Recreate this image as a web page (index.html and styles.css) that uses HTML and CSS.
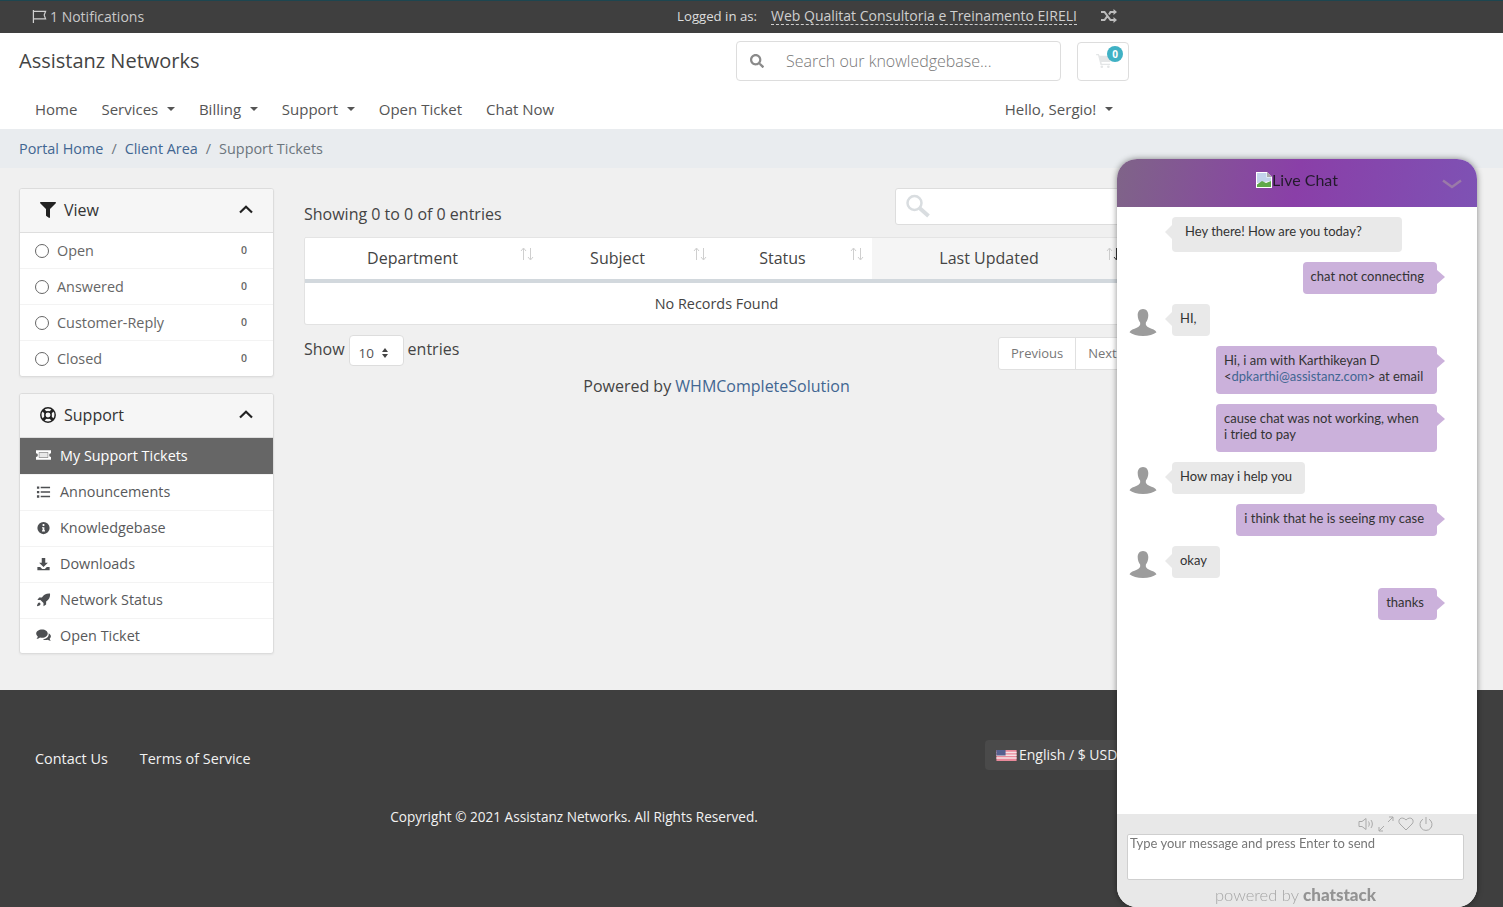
FILE: index.html
```html
<!DOCTYPE html>
<html lang="en">
<head>
<meta charset="utf-8">
<title>Support Tickets - Assistanz Networks</title>
<link rel="stylesheet" href="styles.css">
</head>
<body>
<div class="topbar">
  <a class="notif"><svg class="i-flag" viewBox="0 0 16 16"><path d="M1.500 1v14M1.500 2.500h13l-1.500 4 1.500 4h-13" fill="none" stroke="currentColor" stroke-width="1.300"/></svg>1 Notifications</a>
  <div class="login">
    <span class="login-label">Logged in as:</span>
    <a class="login-name">Web Qualitat Consultoria e Treinamento EIRELI</a>
    <svg class="i-shuffle" viewBox="0 0 16 14"><path d="M0 3h3.500l6 8H13M0 11h3.500L6 7.700M8 5.500 9.500 3H13" fill="none" stroke="currentColor" stroke-width="2"/><path d="M12.500 0 16 3l-3.500 3zM12.500 8 16 11l-3.500 3z" fill="currentColor"/></svg>
  </div>
</div>

<header class="header">
  <div class="header-row">
    <a class="brand">Assistanz Networks</a>
    <div class="search">
      <svg class="i-search" viewBox="0 0 512 512"><path d="M505 442.700L405.300 343c-4.500-4.500-10.600-7-17-7H372c27.600-35.300 44-79.700 44-128C416 93.100 322.900 0 208 0S0 93.100 0 208s93.100 208 208 208c48.300 0 92.700-16.400 128-44v16.300c0 6.400 2.500 12.500 7 17l99.700 99.700c9.400 9.400 24.600 9.400 33.900 0l28.300-28.300c9.400-9.400 9.400-24.600.1-34zM208 336c-70.700 0-128-57.200-128-128 0-70.700 57.200-128 128-128 70.700 0 128 57.200 128 128 0 70.700-57.200 128-128 128z"/></svg>
      <span>Search our knowledgebase...</span>
    </div>
    <a class="cart">
      <svg class="i-cart" viewBox="0 0 18 16"><path d="M0 0h3l1 2h14l-2 7H6l.5 2H16v1.500H5L2.200 1.500H0z"/><circle cx="6.500" cy="14.500" r="1.500"/><circle cx="14" cy="14.500" r="1.500"/></svg>
      <span class="badge">0</span>
    </a>
  </div>
  <nav class="nav">
    <a class="nav-link">Home</a>
    <a class="nav-link caret">Services</a>
    <a class="nav-link caret">Billing</a>
    <a class="nav-link caret">Support</a>
    <a class="nav-link">Open Ticket</a>
    <a class="nav-link">Chat Now</a>
    <a class="nav-link caret nav-user">Hello, Sergio!</a>
  </nav>
</header>

<div class="crumbs">
  <a>Portal Home</a><span class="sep">/</span><a>Client Area</a><span class="sep">/</span><span class="crumb-now">Support Tickets</span>
</div>

<main class="main">
  <aside class="sidebar">
    <section class="card">
      <div class="card-head">
        <svg class="head-icon" viewBox="0 0 512 512"><path d="M487.976 0H24.028C2.710 0-8.047 25.866 7.058 40.971L192 225.941V432c0 7.831 3.821 15.170 10.237 19.662l80 55.980C298.020 518.690 320 507.493 320 487.980V225.941l184.947-184.970C520.021 25.896 509.338 0 487.976 0z"/></svg>
        <span class="head-title">View</span>
        <svg class="chev" viewBox="0 0 14 9"><path d="M1 7.500 7 1.800l6 5.700" fill="none" stroke="currentColor" stroke-width="2.200"/></svg>
      </div>
      <a class="row"><i class="radio"></i><span class="row-text">Open</span><span class="count">0</span></a>
      <a class="row"><i class="radio"></i><span class="row-text">Answered</span><span class="count">0</span></a>
      <a class="row"><i class="radio"></i><span class="row-text">Customer-Reply</span><span class="count">0</span></a>
      <a class="row"><i class="radio"></i><span class="row-text">Closed</span><span class="count">0</span></a>
    </section>
    <section class="card">
      <div class="card-head">
        <svg class="head-icon" viewBox="0 0 16 16"><circle cx="8" cy="8" r="7.200" fill="none" stroke="currentColor" stroke-width="1.500"/><circle cx="8" cy="8" r="3.200" fill="none" stroke="currentColor" stroke-width="1.500"/><path d="m2.800 2.800 3 3m7.400-3-3 3m-7.400 7.400 3-3m7.400 3-3-3" stroke="currentColor" stroke-width="3"/></svg>
        <span class="head-title">Support</span>
        <svg class="chev" viewBox="0 0 14 9"><path d="M1 7.500 7 1.800l6 5.700" fill="none" stroke="currentColor" stroke-width="2.200"/></svg>
      </div>
      <a class="row row-link active"><svg class="row-icon" viewBox="0 0 16 12"><path fill-rule="evenodd" d="M0 1h16v3a2 2 0 0 0 0 4v3H0V8a2 2 0 0 0 0-4zm3 2v6h10V3z"/><path d="M3.500 3.500h9v5h-9z" opacity=".85"/></svg><span>My Support Tickets</span></a>
      <a class="row row-link"><svg class="row-icon" viewBox="0 0 16 14"><path d="M1 1h2.500v2.500H1zM1 5.800h2.500v2.500H1zM1 10.500h2.500V13H1zM5 1.500h10V3H5zM5 6.300h10v1.500H5zM5 11h10v1.500H5z"/></svg><span>Announcements</span></a>
      <a class="row row-link"><svg class="row-icon" viewBox="0 0 16 16"><path fill-rule="evenodd" d="M8 1a7 7 0 1 1 0 14A7 7 0 0 1 8 1zM7 3.500v2.200h2V3.500zM6.300 7v1.400H7v2.300h-.7V12h3.400v-1.300H9V7z"/></svg><span>Knowledgebase</span></a>
      <a class="row row-link"><svg class="row-icon" viewBox="0 0 16 16"><path d="M6 1h4v5.500h3l-5 5-5-5h3zM1 11.500h3.200L6.500 13.700h3l2.300-2.200H15V15H1z"/></svg><span>Downloads</span></a>
      <a class="row row-link"><svg class="row-icon" viewBox="0 0 16 16"><path d="M15.500.5c.4 4-1.200 7.300-4.500 9.300V13l-3 2v-3.500L4.500 8H1l2-3h3.200C8.200 1.700 11.500.100 15.500.5zM2.500 11c1.200-.6 2.500.9 2 2-.6 1.200-2.500 1.700-4 2 .2-1.500.8-3.400 2-4z"/></svg><span>Network Status</span></a>
      <a class="row row-link"><svg class="row-icon" viewBox="0 0 16 14"><path d="M6.500 1C10 1 12.500 3 12.500 5.500S10 10 6.500 10c-.8 0-1.500-.1-2.200-.3C3.300 10.500 2 11 .5 11c.8-.8 1.300-1.700 1.400-2.500C.8 7.700.2 6.700.2 5.500.2 3 3 1 6.500 1z"/><path d="M13.500 5c1.500.8 2.400 2 2.400 3.400 0 1-.5 1.900-1.300 2.600.1.700.5 1.400 1.200 2-1.300 0-2.400-.4-3.200-1-.7.200-1.400.3-2.100.3-1.300 0-2.500-.3-3.400-.9 4 0 7-2.600 6.400-6.400z"/></svg><span>Open Ticket</span></a>
    </section>
  </aside>

  <div class="content">
    <div class="tools">
      <span class="showing">Showing 0 to 0 of 0 entries</span>
      <div class="filter">
        <svg class="i-filter" viewBox="0 0 24 24"><circle cx="9" cy="9" r="7" fill="none" stroke="currentColor" stroke-width="2.500"/><path d="m14 14 9 8" stroke="currentColor" stroke-width="4"/></svg>
      </div>
    </div>
    <table class="tickets">
      <thead>
        <tr>
          <th class="col-dept">Department<svg class="sort" viewBox="0 0 16 14"><path d="M4.500 13V1.500M2 4l2.500-3L7 4M11.500 1v11.500M9 10l2.500 3 2.500-3" fill="none" stroke="currentColor"/></svg></th>
          <th class="col-subj">Subject<svg class="sort" viewBox="0 0 16 14"><path d="M4.500 13V1.500M2 4l2.500-3L7 4M11.500 1v11.500M9 10l2.500 3 2.500-3" fill="none" stroke="currentColor"/></svg></th>
          <th class="col-stat">Status<svg class="sort" viewBox="0 0 16 14"><path d="M4.500 13V1.500M2 4l2.500-3L7 4M11.500 1v11.500M9 10l2.500 3 2.500-3" fill="none" stroke="currentColor"/></svg></th>
          <th class="col-last">Last Updated<svg class="sort" viewBox="0 0 16 14"><path d="M4.500 13V1.500M2 4l2.500-3L7 4" fill="none" stroke="#ccc"/><path d="M11.500 1v11.500M9 10l2.500 3 2.500-3" fill="none" stroke="#333"/></svg></th>
        </tr>
      </thead>
      <tbody>
        <tr><td colspan="4">No Records Found</td></tr>
      </tbody>
    </table>
    <div class="under">
      <div class="length">Show <span class="select">10<svg viewBox="0 0 8 12"><path d="M4 1 7 5H1zM4 11 1 7h6z" fill="#444"/></svg></span> entries</div>
      <div class="pager"><a>Previous</a><a>Next</a></div>
    </div>
    <p class="powered">Powered by <a>WHMCompleteSolution</a></p>
  </div>
</main>

<footer class="footer">
  <div class="foot-row">
    <nav class="foot-links"><a>Contact Us</a><a>Terms of Service</a></nav>
    <a class="lang"><svg class="i-usa" viewBox="0 0 22 12"><path fill="#e8899a" d="M0 0h22v12H0z"/><path fill="#f4e3e6" d="M0 2h22v1.500H0zM0 5h22v1.500H0zM0 8h22v1.500H0z"/><path fill="#56608f" d="M0 0h10v6H0z"/></svg>English / $ USD</a>
  </div>
  <p class="copy">Copyright © 2021 Assistanz Networks. All Rights Reserved.</p>
</footer>

<aside class="chat">
  <div class="chat-head">
    <svg class="i-broken" viewBox="0 0 16 16"><path fill="#fff" d="M0 0h11l5 5v11H0z"/><path fill="#c3d3ec" d="M1 1h9.500v4.500H15V9L1 11z"/><path fill="#5fa84a" d="M1 15v-2.500L6 9l4 2 5-2v6z"/><path fill="#a9a9a9" d="M11 0l5 5h-5z"/></svg><span>Live Chat</span>
    <svg class="chat-min" viewBox="0 0 20 10"><path d="M1 1.500 10 8l9-6.500" fill="none" stroke="currentColor" stroke-width="2.500"/></svg>
  </div>
  <div class="msgs">
    <div class="msg msg-in msg-first"><div class="bubble">Hey there! How are you today?</div></div>
    <div class="msg msg-out"><div class="bubble">chat not connecting</div></div>
    <div class="msg msg-in"><svg class="avatar" viewBox="0 0 28 28"><path d="M14 0c3.600 0 5.500 3 5.500 6.500 0 3-1 5.500-2.500 7.500-.6 2.500.5 4 3.500 5.500 3 1.300 6.500 2.200 7.500 4.500-3 2.500-8 4-14 4S3 26.500 0 24c1-2.300 4.500-3.200 7.500-4.500 3-1.500 4.100-3 3.500-5.500-1.500-2-2.500-4.500-2.500-7.500C8.500 3 10.400 0 14 0z"/></svg><div class="bubble">HI,</div></div>
    <div class="msg msg-out"><div class="bubble bubble-wide"><span class="line">Hi, i am with Karthikeyan D</span><span class="line">&lt;<a class="mail">dpkarthi@assistanz.com</a>&gt; at email</span></div></div>
    <div class="msg msg-out"><div class="bubble bubble-wide">cause chat was not working, when i tried to pay</div></div>
    <div class="msg msg-in"><svg class="avatar" viewBox="0 0 28 28"><path d="M14 0c3.600 0 5.500 3 5.500 6.500 0 3-1 5.500-2.500 7.500-.6 2.500.5 4 3.500 5.500 3 1.300 6.500 2.200 7.500 4.500-3 2.500-8 4-14 4S3 26.500 0 24c1-2.300 4.500-3.200 7.500-4.500 3-1.500 4.100-3 3.500-5.500-1.500-2-2.500-4.500-2.500-7.500C8.500 3 10.400 0 14 0z"/></svg><div class="bubble">How may i help you</div></div>
    <div class="msg msg-out"><div class="bubble">i think that he is seeing my case</div></div>
    <div class="msg msg-in"><svg class="avatar" viewBox="0 0 28 28"><path d="M14 0c3.600 0 5.500 3 5.500 6.500 0 3-1 5.500-2.500 7.500-.6 2.500.5 4 3.500 5.500 3 1.300 6.500 2.200 7.500 4.500-3 2.500-8 4-14 4S3 26.500 0 24c1-2.300 4.500-3.200 7.500-4.500 3-1.500 4.100-3 3.500-5.500-1.500-2-2.500-4.500-2.500-7.500C8.500 3 10.400 0 14 0z"/></svg><div class="bubble">okay</div></div>
    <div class="msg msg-out"><div class="bubble">thanks</div></div>
  </div>
  <div class="chat-foot">
    <div class="chat-tools">
      <svg viewBox="0 0 16 14"><path d="M1 4.500h3L8 1.500v11l-4-3H1zM10.500 4.500c1 1.500 1 3.500 0 5M13 3c1.800 2.500 1.800 5.500 0 8" fill="none" stroke="currentColor"/></svg>
      <svg viewBox="0 0 16 16"><path d="M1 15l5-5M1 11v4h4M15 1l-5 5M11 1h4v4" fill="none" stroke="currentColor"/></svg>
      <svg viewBox="0 0 16 14"><path d="M8 13 2 7C.500 5.500.500 3 2 1.800 3.500.600 6 .800 8 3c2-2.200 4.500-2.400 6-1.200 1.500 1.200 1.500 3.700 0 5.200z" fill="none" stroke="currentColor"/></svg>
      <svg viewBox="0 0 16 16"><path d="M8 1v7M5 3.200a6 6 0 1 0 6 0" fill="none" stroke="currentColor"/></svg>
    </div>
    <div class="chat-input">Type your message and press Enter to send</div>
    <div class="chat-brand">powered by <b>chatstack</b></div>
  </div>
</aside>
</body>
</html>
```
FILE: styles.css
```css
* { box-sizing: border-box; }
html, body { margin: 0; padding: 0; }
body {
  height: 907px;
  overflow: hidden;
  display: flex;
  flex-direction: column;
  font-family: "Open Sans", "Liberation Sans", sans-serif;
  font-size: 14px;
  color: #58595b;
  background: #f0f0f0;
}
a { color: inherit; text-decoration: none; }
svg { display: block; flex: none; }

/* top bar */
.topbar {
  height: 33px;
  flex: none;
  background: #3f3f3f;
  border-top: 1px solid #1d4650;
  display: flex;
  align-items: center;
  padding: 0 0 2px 32px;
  color: #c9c9c9;
  font-size: 14px;
}
.notif { display: flex; align-items: center; gap: 3px; }
.i-flag { width: 15px; height: 15px; color: #d0d0d0; }
.login { display: flex; align-items: center; margin-left: 533px; font-size: 13.2px; color: #ddd; }
.login-name {
  margin-left: 14px;
  font-size: 14px;
  color: #cfcfcf;
  border-bottom: 1px dashed #cfcfcf;
  line-height: 17px;
}
.i-shuffle { width: 16px; height: 14px; margin-left: 24px; color: #bdbdbd; }

/* header */
.header { flex: none; height: 96px; background: #fff; padding: 0 0 0 19px; width: 100%; }
.header-row { width: 1110px; height: 56px; display: flex; align-items: center; }
.brand { font-size: 20px; color: #444; line-height: 56px; }
.search {
  margin-left: auto;
  width: 325px;
  height: 40px;
  margin-top: -1px;
  display: flex;
  align-items: center;
  background: #fff;
  border: 1px solid #ddd;
  border-radius: 4px;
  padding-left: 13px;
  color: #777;
  font-size: 16px;
  font-weight: 300;
}
.i-search { width: 14px; height: 14px; fill: #8a8a8a; margin-right: 22px; }
.cart {
  position: relative;
  margin-left: 16px;
  width: 52px;
  height: 39px;
  border: 1px solid #ddd;
  border-radius: 4px;
  display: flex;
  align-items: center;
  padding-left: 18px;
}
.i-cart { width: 16px; height: 14px; fill: #e4e6e7; }
.badge {
  position: absolute;
  left: 29px;
  top: 3px;
  width: 16px;
  height: 16px;
  border-radius: 50%;
  background: #3fb1c4;
  color: #fff;
  font-size: 10px;
  font-weight: 700;
  line-height: 16px;
  text-align: center;
}
.nav { width: 1110px; display: flex; align-items: center; height: 40px; font-size: 15px; color: #555; padding-left: 4px; }
.nav-link { padding: 0 12px; line-height: 40px; display: flex; align-items: center; }
.caret::after {
  content: "";
  margin-left: 8.700px;
  border-top: 4.500px solid #555;
  border-left: 4.500px solid transparent;
  border-right: 4.500px solid transparent;
}
.nav-user { margin-left: auto; margin-right: 4px; }

/* breadcrumb */
.crumbs {
  flex: none;
  height: 39px;
  background: #e9ecef;
  padding-left: 19px;
  display: flex;
  align-items: center;
  color: #426692;
  font-size: 14.400px;
}
.sep { margin: 0 8px; color: #6c757d; }
.crumb-now { color: #6c757d; }

/* main */
.main { flex: 1; display: flex; gap: 30px; padding: 20px 0 0 19px; min-height: 0; }
.sidebar { width: 255px; flex: none; display: flex; flex-direction: column; gap: 16px; }
.card {
  background: #fff;
  border: 1px solid #dcdcdc;
  border-radius: 3px;
  box-shadow: 0 1px 2px rgba(0,0,0,.05);
  overflow: hidden;
}
.card-head {
  height: 44px;
  display: flex;
  align-items: center;
  padding: 0 20px 2px;
  background: #f6f6f6;
  border-bottom: 1px solid #dedede;
  color: #333;
}
.head-icon { width: 16px; height: 16px; fill: #222; color: #222; }
.head-title { margin-left: 8px; font-size: 16px; }
.chev { width: 14px; height: 9px; margin-left: auto; color: #222; }
.row {
  height: 36px;
  display: flex;
  align-items: center;
  padding: 0 26px 0 15px;
  border-top: 1px solid #f3f3f3;
  font-size: 14.400px;
  color: #666;
}
.card-head + .row { border-top: 0; height: 35px; }
.radio {
  width: 14px;
  height: 14px;
  border: 1.500px solid #666;
  border-radius: 50%;
  margin-right: 8px;
}
.row-text { flex: 1; }
.count { font-size: 10.500px; font-weight: 600; color: #666; padding-bottom: 2px; }
.row-link { padding: 0 26px 2px 16px; color: #58595b; }
.row-link:last-child { height: 35px; }
.row-icon { width: 15px; height: 14px; fill: #4d4f52; margin-right: 9px; }
.card-head + .row-link.active { background: #666; color: #fff; height: 36px; border-top: 0; }
.active .row-icon { fill: #fff; }

/* content */
.content { width: 825px; flex: none; }
.tools { display: flex; justify-content: space-between; align-items: flex-end; height: 49px; }
.showing { font-size: 16px; color: #444; line-height: 24px; margin-bottom: 11px; }
.filter {
  width: 234px;
  height: 37px;
  align-self: flex-start;
  background: #fff;
  border: 1px solid #ddd;
  border-radius: 3px;
  padding: 5px 0 0 9px;
}
.i-filter { width: 25px; height: 24px; color: #d9dde0; }
.tickets {
  width: 825px;
  table-layout: fixed;
  border-collapse: separate;
  border-spacing: 0;
  background: #fff;
  border: 1px solid #e2e2e2;
  border-top: 0;
  border-radius: 3px;
  color: #444;
}
.tickets th {
  position: relative;
  height: 46px;
  padding: 0 32px 2px 10px;
  font-size: 16px;
  font-weight: 400;
  text-align: center;
  border-top: 1px solid #e4e4e4;
  border-bottom: 4px solid #d2d8dd;
}
.col-dept { width: 237px; }
.col-subj { width: 173px; }
.col-stat { width: 157px; }
.tickets .col-last { background: #f5f5f5; }
.sort { position: absolute; right: 7px; top: 9px; width: 16px; height: 14px; color: #cfcfcf; }
.tickets td { height: 41px; text-align: center; font-size: 14.400px; color: #444; padding: 0; }
.under { display: flex; justify-content: space-between; margin-top: 10px; }
.length { display: flex; align-items: center; gap: 4px; height: 28px; font-size: 16px; color: #444; }
.select {
  width: 55px;
  height: 31px;
  background: #fff;
  border: 1px solid #ddd;
  border-radius: 4px;
  padding: 4px 0 0 9px;
  margin-top: 3px;
  display: flex;
  align-items: center;
  gap: 7px;
  font-size: 13.500px;
  color: #555;
}
.select svg { width: 8px; height: 12px; }
.pager { display: flex; margin-top: 2px; height: 33px; background: #fff; border: 1px solid #e0e0e0; border-radius: 3px; font-size: 13px; color: #777; width: 131px; }
.pager a { padding: 0 12px; line-height: 31px; }
.pager a + a { border-left: 1px solid #e0e0e0; }
.powered { margin: 4px 0 0; text-align: center; width: 825px; font-size: 16px; line-height: 24px; color: #444; }
.powered a { color: #426692; }

/* footer */
.footer { flex: none; height: 217px; background: #3f3f3f; color: #f2f2f2; padding: 50px 0 0 19px; }
.foot-row { width: 1110px; display: flex; align-items: flex-start; justify-content: space-between; }
.foot-links { display: flex; gap: 32px; padding: 9px 0 0 16px; font-size: 14.400px; line-height: 20px; }
.lang {
  width: 144px;
  height: 30px;
  display: flex;
  align-items: center;
  gap: 2px;
  padding: 0 0 2px 11px;
  background: #4a4a4a;
  border-radius: 4px;
  font-size: 14px;
}
.i-usa { width: 21px; height: 11px; margin-top: 2px; }
.copy { width: 1110px; margin: 37px 0 0; text-align: center; font-size: 13.600px; line-height: 20px; }

/* chat */
.chat {
  position: fixed;
  left: 1117px;
  top: 159px;
  width: 360px;
  height: 748px;
  display: flex;
  flex-direction: column;
  background: #fff;
  border-radius: 20px;
  overflow: hidden;
  box-shadow: 0 0 6px rgba(0,0,0,.45);
  font-family: Lato, "Liberation Sans", sans-serif;
  font-size: 13px;
  line-height: 16px;
  color: #333;
}
.chat-head {
  position: relative;
  flex: none;
  height: 48px;
  display: flex;
  align-items: center;
  justify-content: center;
  padding-bottom: 6px;
  background: linear-gradient(100deg, #7f6488 0%, #8a3fa8 50%, #7e52b4 100%);
  color: #231a2c;
  font-size: 16px;
}
.i-broken { width: 16px; height: 16px; }
.chat-min { position: absolute; right: 15px; top: 20px; width: 20px; height: 10px; color: #9a7aa8; }
.msgs { flex: 1; display: flex; flex-direction: column; gap: 10px; padding: 10px 40px 0 12px; }
.msg { display: flex; align-items: flex-end; }
.msg-in { padding-left: 43px; }
.avatar { width: 28px; height: 27px; fill: #9c9c9c; margin: 0 15px 0 -43px; }
.msg-out { justify-content: flex-end; }
.bubble { position: relative; padding: 6px 13px 10px 8px; border-radius: 4px; }
.msg-in .bubble { background: #e9e9e9; }
.msg-out .bubble { background: #cbb1db; }
.bubble::before {
  content: "";
  position: absolute;
  top: 8px;
  border-top: 7px solid transparent;
  border-bottom: 7px solid transparent;
}
.msg-in .bubble::before { left: -7px; border-right: 7px solid #e9e9e9; }
.msg-out .bubble::before { right: -8px; border-left: 8px solid #cbb1db; }
.msg-first .bubble { width: 230px; height: 35px; padding: 6px 0 0 13px; }
.bubble-wide { width: 221px; }
.line { display: block; }
.mail { color: #426692; }
.chat-foot { flex: none; height: 93px; background: #e8e8e8; padding: 2px 13px 0 10px; }
.chat-tools { display: flex; justify-content: flex-end; gap: 4px; height: 18px; padding-right: 30px; color: #a9a9a9; }
.chat-tools svg { width: 16px; height: 16px; }
.chat-input {
  height: 46px;
  background: #fff;
  border: 1px solid #cfcfcf;
  border-radius: 2px;
  padding: 0 2px;
  color: #777;
  font-size: 13px;
  line-height: 16px;
}
.chat-brand { text-align: center; margin-top: 5px; font-size: 16.500px; line-height: 20px; font-weight: 300; color: #a5a5a5; }
.chat-brand b { font-size: 17px; font-weight: 900; color: #939393; }
```
